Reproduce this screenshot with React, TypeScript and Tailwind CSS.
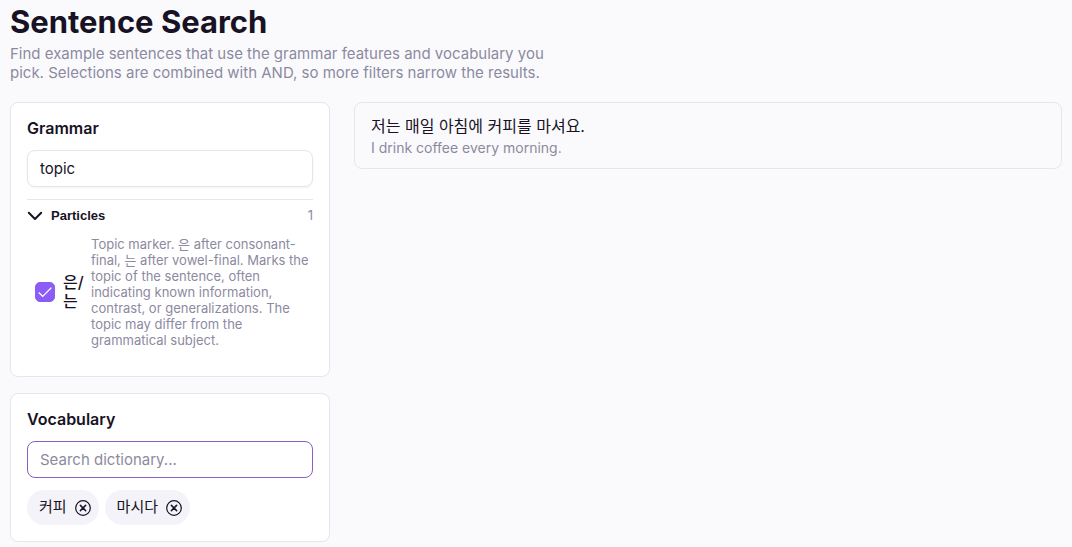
import { useState } from "react";

const sentences = [
  { id: 1, text: "저는 매일 아침에 커피를 마셔요.", translation: "I drink coffee every morning." },
];

const particles = [
  {
    id: "topic",
    label: "은/는",
    description:
      "Topic marker. 은 after consonant-final, 는 after vowel-final. Marks the topic of the sentence, often indicating known information, contrast, or generalizations. The topic may differ from the grammatical subject.",
  },
];

function ChevronIcon() {
  return (
    <svg viewBox="0 0 16 16" className="size-4" fill="none" stroke="currentColor" strokeWidth="2" strokeLinecap="round" strokeLinejoin="round">
      <path d="M1.8 4.8L8 11l6.2-6.2" />
    </svg>
  );
}

function RemoveIcon() {
  return (
    <svg viewBox="0 0 16 16" className="size-4" fill="none" stroke="currentColor" strokeLinecap="round">
      <circle cx="8" cy="8" r="7.3" strokeWidth="1.2" />
      <path d="M5.4 5.4l5.2 5.2M10.6 5.4l-5.2 5.2" strokeWidth="1.5" />
    </svg>
  );
}

function GrammarPanel() {
  const [filter, setFilter] = useState("topic");
  const [open, setOpen] = useState(true);
  const [selected, setSelected] = useState<string[]>(["topic"]);

  function toggle(id: string) {
    setSelected((prev) => (prev.includes(id) ? prev.filter((x) => x !== id) : [...prev, id]));
  }

  return (
    <section className="rounded-lg border border-[#e6e5ed] bg-white p-4">
      <h2 className="text-base leading-[19px] font-semibold">Grammar</h2>
      <input
        type="text"
        aria-label="Filter grammar"
        value={filter}
        onChange={(e) => setFilter(e.target.value)}
        className="mt-3 block h-[37px] w-full rounded-lg border border-[#e6e5ed] bg-white px-3 text-[15px] shadow-xs outline-none"
      />
      <div className="mt-3 border-t border-[#e6e5ed] pt-2">
        <button
          type="button"
          aria-expanded={open}
          onClick={() => setOpen(!open)}
          className="flex h-4 w-full items-center gap-2"
        >
          <ChevronIcon />
          <span className="font-['Liberation_Sans',sans-serif] text-[13px] font-bold">Particles</span>
          <span className="ml-auto text-[13px] text-[#8c8a9f]">{particles.length}</span>
        </button>
        {open &&
          particles.map((p) => (
            <label key={p.id} className="flex items-center gap-2 py-3 pl-2">
              <span className="relative flex size-5 shrink-0">
                <input
                  type="checkbox"
                  checked={selected.includes(p.id)}
                  onChange={() => toggle(p.id)}
                  className="peer size-5 appearance-none rounded-[5px] border border-[#d5d3de] checked:border-[#8b5cf6] checked:bg-[#8b5cf6]"
                />
                <svg
                  viewBox="0 0 20 20"
                  className="pointer-events-none absolute inset-0 hidden size-5 peer-checked:block"
                  fill="none"
                  stroke="white"
                  strokeWidth="1.2"
                  strokeLinecap="round"
                >
                  <path d="M4 10.8L7.7 14.3L16 6" />
                </svg>
              </span>
              <span className="w-5 shrink-0 text-base leading-[19px] font-medium">{p.label}</span>
              <span className="text-[13px] leading-4 text-[#8c8a9f]">{p.description}</span>
            </label>
          ))}
      </div>
    </section>
  );
}

function VocabularyPanel() {
  const [words, setWords] = useState(["커피", "마시다"]);

  return (
    <section className="rounded-lg border border-[#e6e5ed] bg-white p-4">
      <h2 className="text-base leading-[19px] font-semibold">Vocabulary</h2>
      <input
        type="text"
        aria-label="Search dictionary"
        placeholder="Search dictionary..."
        className="mt-3 block h-[37px] w-full rounded-lg border border-[#8b5fbf] bg-white px-3 text-[15px] outline-none placeholder:text-[#8c8a9f]"
      />
      <div className="mt-3 flex flex-wrap gap-1.5">
        {words.map((word) => (
          <span key={word} className="flex h-[35px] items-center gap-2 rounded-full bg-[#f4f3f9] pr-2 pl-3 text-[15px]">
            {word}
            <button
              type="button"
              aria-label={`Remove ${word}`}
              onClick={() => setWords(words.filter((w) => w !== word))}
            >
              <RemoveIcon />
            </button>
          </span>
        ))}
      </div>
    </section>
  );
}

export default function App() {
  return (
    <div className="min-h-screen bg-[#fafafd] px-2.5 pb-1 font-[Inter,'Noto_Sans_CJK_KR',sans-serif] text-[#181225]">
      <header className="pt-1">
        <h1 className="text-[31px] leading-9 font-bold">Sentence Search</h1>
        <p className="mt-1 max-w-[560px] text-[15px] leading-[19px] text-[#8c8a9f]">
          Find example sentences that use the grammar features and vocabulary you pick. Selections are
          combined with AND, so more filters narrow the results.
        </p>
      </header>
      <main className="mt-5 flex items-start gap-6">
        <div className="flex w-80 shrink-0 flex-col gap-4">
          <GrammarPanel />
          <VocabularyPanel />
        </div>
        <ul className="min-w-0 flex-1">
          {sentences.map((s) => (
            <li key={s.id} className="rounded-lg border border-[#e6e5ed] px-4 py-[11px]">
              <p className="text-base leading-6">{s.text}</p>
              <p className="text-sm leading-[19px] text-[#8c8a9f]">{s.translation}</p>
            </li>
          ))}
        </ul>
      </main>
    </div>
  );
}
